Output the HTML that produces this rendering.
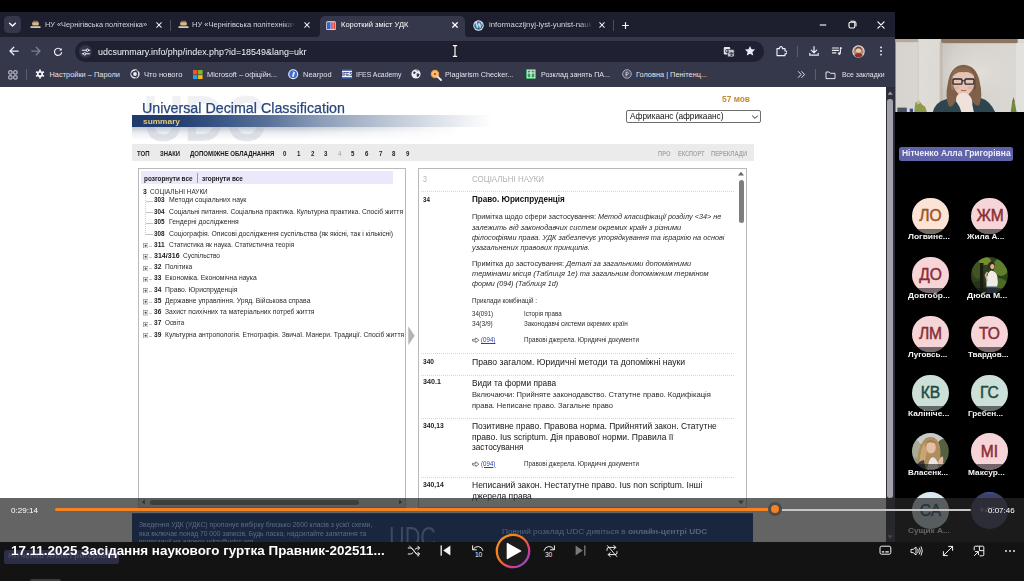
<!DOCTYPE html>
<html lang="uk"><head><meta charset="utf-8"><title>Короткий зміст УДК</title>
<style>
html,body{margin:0;padding:0;background:#000;}
body{width:1024px;height:581px;overflow:hidden;position:relative;font-family:"Liberation Sans",sans-serif;}
#root{position:absolute;left:0;top:0;width:1024px;height:581px;overflow:hidden;background:#000;}
#root div,#root svg,#root span.t{position:absolute;}
.t{white-space:nowrap;transform-origin:0 50%;display:block;}
.t i{font-style:italic;}
.layer{left:0;top:0;width:1024px;height:581px;overflow:hidden;}
#l-page{clip-path:inset(87px 129px 34px 0);}
</style></head><body><div id="root">
<div class="layer" id="l-page">
<div style="left:0px;top:87px;width:886px;height:460px;background:#ffffff;"></div>
<div style="left:885.5px;top:87px;width:9px;height:460px;background:#2c2e3c;"></div>
<svg style="left:886px;top:89px;" width="8.5" height="8" viewBox="0 0 8.5 8"><path d="M1.6 5.8 L4.25 2.6 L6.9 5.8 Z" fill="#9a9ba6"/></svg>
<div style="left:887.4px;top:98.6px;width:5.4px;height:399px;background:#a2a2a8;border-radius:2.7px;"></div>
<svg style="left:886px;top:533px;" width="8.5" height="8" viewBox="0 0 8.5 8"><path d="M1.6 2.2 L4.25 5.4 L6.9 2.2 Z" fill="#9a9ba6"/></svg>
<span id="t1" class="t" style="left:143px;top:81.1px;font-size:64px;line-height:76.8px;color:transparent;font-weight:700;transform:scaleX(0.8871);background:linear-gradient(180deg,#f0f2f4 0%,#eef0f3 44%,#d3d8df 60%,#dde1e6 72%,#eef0f2 84%,#f5f6f7 100%);-webkit-background-clip:text;background-clip:text;filter:blur(0.5px);">UDC</span>
<span id="t2" class="t" style="left:142px;top:98.88px;font-size:15.2px;line-height:18.24px;color:#27477c;transform:scaleX(0.9395);-webkit-text-stroke:0.25px #27477c;">Universal Decimal Classification</span>
<div style="left:132px;top:115.3px;width:360px;height:12px;background:linear-gradient(90deg,#1f3c6c 0%,#213e6e 12%,#3a5787 25%,#5a7299 38%,#8b9cb8 52%,#b5c0d0 68%,#dde2ea 85%,#ffffff 100%);"></div>
<div style="left:132px;top:127.3px;width:330px;height:13px;background:linear-gradient(180deg,rgba(178,186,199,.8),rgba(214,219,227,.5) 45%,rgba(255,255,255,0));-webkit-mask-image:linear-gradient(90deg,#000 0%,#000 50%,transparent 100%);"></div>
<span id="t3" class="t" style="left:143px;top:116.81px;font-size:8px;line-height:9.6px;color:#e8c878;font-weight:700;transform:scaleX(1.0400);">summary</span>
<span id="t4" class="t" style="left:722px;top:94.97px;font-size:8.2px;line-height:9.84px;color:#c98a2f;font-weight:700;transform:scaleX(1.0228);">57 мов</span>
<div style="left:626px;top:110px;width:135px;height:12.5px;background:#fff;border:0.8px solid #6d6d6d;border-radius:2px;box-sizing:border-box;"></div>
<span id="t5" class="t" style="left:629.5px;top:111.08px;font-size:9.2px;line-height:11.04px;color:#111;transform:scaleX(0.9004);">Африкаанс (африкаанс)</span>
<svg style="left:750.8px;top:112.8px;" width="8" height="8" viewBox="0 0 8 8"><path d="M1.2 2.6 L4 5.4 L6.8 2.6" fill="none" stroke="#222" stroke-width="1"/></svg>
<div style="left:132px;top:144px;width:622px;height:17.3px;background:#ebebeb;"></div>
<span id="t6" class="t" style="left:137px;top:150.02px;font-size:6.3px;line-height:7.56px;color:#1c1c1c;font-weight:700;transform:scaleX(0.9524);">ТОП</span>
<span id="t7" class="t" style="left:159.5px;top:150.02px;font-size:6.3px;line-height:7.56px;color:#1c1c1c;font-weight:700;transform:scaleX(0.9336);">ЗНАКИ</span>
<span id="t8" class="t" style="left:189.5px;top:150.02px;font-size:6.3px;line-height:7.56px;color:#1c1c1c;font-weight:700;transform:scaleX(0.9615);">ДОПОМІЖНЕ ОБЛАДНАННЯ</span>
<span id="t9" class="t" style="left:283.3px;top:150.02px;font-size:6.3px;line-height:7.56px;color:#1c1c1c;font-weight:700;transform:scaleX(0.9671);">0</span>
<span id="t10" class="t" style="left:296.9px;top:150.02px;font-size:6.3px;line-height:7.56px;color:#1c1c1c;font-weight:700;transform:scaleX(0.9671);">1</span>
<span id="t11" class="t" style="left:310.5px;top:150.02px;font-size:6.3px;line-height:7.56px;color:#1c1c1c;font-weight:700;transform:scaleX(0.9671);">2</span>
<span id="t12" class="t" style="left:324.1px;top:150.02px;font-size:6.3px;line-height:7.56px;color:#1c1c1c;font-weight:700;transform:scaleX(0.9671);">3</span>
<span id="t13" class="t" style="left:337.7px;top:150.02px;font-size:6.3px;line-height:7.56px;color:#b5b5b5;font-weight:700;transform:scaleX(0.9671);">4</span>
<span id="t14" class="t" style="left:351.3px;top:150.02px;font-size:6.3px;line-height:7.56px;color:#1c1c1c;font-weight:700;transform:scaleX(0.9671);">5</span>
<span id="t15" class="t" style="left:364.9px;top:150.02px;font-size:6.3px;line-height:7.56px;color:#1c1c1c;font-weight:700;transform:scaleX(0.9671);">6</span>
<span id="t16" class="t" style="left:378.5px;top:150.02px;font-size:6.3px;line-height:7.56px;color:#1c1c1c;font-weight:700;transform:scaleX(0.9671);">7</span>
<span id="t17" class="t" style="left:392.1px;top:150.02px;font-size:6.3px;line-height:7.56px;color:#1c1c1c;font-weight:700;transform:scaleX(0.9671);">8</span>
<span id="t18" class="t" style="left:405.7px;top:150.02px;font-size:6.3px;line-height:7.56px;color:#1c1c1c;font-weight:700;transform:scaleX(0.9671);">9</span>
<span id="t19" class="t" style="left:658.3px;top:150.02px;font-size:6.3px;line-height:7.56px;color:#a9a9a9;font-weight:700;transform:scaleX(0.9227);">ПРО</span>
<span id="t20" class="t" style="left:677.5px;top:150.02px;font-size:6.3px;line-height:7.56px;color:#a9a9a9;font-weight:700;transform:scaleX(0.8861);">ЕКСПОРТ</span>
<span id="t21" class="t" style="left:710.8px;top:150.02px;font-size:6.3px;line-height:7.56px;color:#a9a9a9;font-weight:700;transform:scaleX(0.9238);">ПЕРЕКЛАДИ</span>
<div style="left:138px;top:168.3px;width:267.6px;height:340px;border:0.8px solid #b9b9b9;box-sizing:border-box;background:#fff;"></div>
<div style="left:141px;top:171.3px;width:252px;height:13px;background:#e9e9fb;"></div>
<span id="t22" class="t" style="left:143.9px;top:174.57px;font-size:6.6px;line-height:7.92px;color:#1a1a1a;font-weight:700;transform:scaleX(0.9694);">розгорнути все</span>
<div style="left:197.4px;top:173.3px;width:0.7px;height:9.5px;background:#9a9aa8;"></div>
<span id="t23" class="t" style="left:202.3px;top:174.57px;font-size:6.6px;line-height:7.92px;color:#1a1a1a;font-weight:700;transform:scaleX(0.9724);">згорнути все</span>
<span id="t24" class="t" style="left:142.6px;top:188px;font-size:7px;line-height:8.4px;color:#1a1a1a;font-weight:700;transform:scaleX(0.9728);">3</span>
<span id="t25" class="t" style="left:149.9px;top:188px;font-size:7px;line-height:8.4px;color:#2a2a2a;transform:scaleX(0.9100);">СОЦІАЛЬНІ НАУКИ</span>
<div style="left:145.3px;top:195px;width:0;height:40px;border-left:0.7px dotted #cfcfcf;"></div>
<div style="left:146px;top:201px;width:6.5px;height:0.7px;background:#c4c4c4;"></div>
<span id="t26" class="t" style="left:154.2px;top:196.29px;font-size:7px;line-height:8.4px;color:#1a1a1a;font-weight:700;transform:scaleX(0.9070);">303</span>
<span id="t27" class="t" style="left:168.8px;top:196.29px;font-size:7px;line-height:8.4px;color:#2a2a2a;transform:scaleX(0.9858);">Методи соціальних наук</span>
<div style="left:146px;top:212.3px;width:6.5px;height:0.7px;background:#c4c4c4;"></div>
<span id="t28" class="t" style="left:154.2px;top:207.59px;font-size:7px;line-height:8.4px;color:#1a1a1a;font-weight:700;transform:scaleX(0.9070);">304</span>
<span id="t29" class="t" style="left:168.8px;top:207.59px;font-size:7px;line-height:8.4px;color:#2a2a2a;transform:scaleX(0.9649);">Соціальні питання. Соціальна практика. Культурна практика. Спосіб життя</span>
<div style="left:146px;top:223px;width:6.5px;height:0.7px;background:#c4c4c4;"></div>
<span id="t30" class="t" style="left:154.2px;top:218.29px;font-size:7px;line-height:8.4px;color:#1a1a1a;font-weight:700;transform:scaleX(0.9070);">305</span>
<span id="t31" class="t" style="left:168.8px;top:218.29px;font-size:7px;line-height:8.4px;color:#2a2a2a;transform:scaleX(0.9731);">Гендерні дослідження</span>
<div style="left:146px;top:234.3px;width:6.5px;height:0.7px;background:#c4c4c4;"></div>
<span id="t32" class="t" style="left:154.2px;top:229.59px;font-size:7px;line-height:8.4px;color:#1a1a1a;font-weight:700;transform:scaleX(0.9070);">308</span>
<span id="t33" class="t" style="left:168.8px;top:229.59px;font-size:7px;line-height:8.4px;color:#2a2a2a;transform:scaleX(0.9718);">Соціографія. Описові дослідження суспільства (як якісні, так і кількісні)</span>
<div style="left:148.6px;top:245.6px;width:3.6px;height:0.7px;background:#c4c4c4;"></div>
<svg style="left:142.8px;top:243.1px;" width="5.4" height="5.4" viewBox="0 0 5.4 5.4"><rect x="0.4" y="0.4" width="4.6" height="4.6" fill="#fff" stroke="#8c8c8c" stroke-width="0.7"/><path d="M1.5 2.7 H3.9 M2.7 1.5 V3.9" stroke="#333" stroke-width="0.8"/></svg>
<span id="t34" class="t" style="left:154.2px;top:240.89px;font-size:7px;line-height:8.4px;color:#1a1a1a;font-weight:700;transform:scaleX(0.9383);">311</span>
<span id="t35" class="t" style="left:168.8px;top:240.89px;font-size:7px;line-height:8.4px;color:#2a2a2a;transform:scaleX(0.9425);">Статистика як наука. Статистична теорія</span>
<div style="left:148.6px;top:256.8px;width:3.6px;height:0.7px;background:#c4c4c4;"></div>
<svg style="left:142.8px;top:254.3px;" width="5.4" height="5.4" viewBox="0 0 5.4 5.4"><rect x="0.4" y="0.4" width="4.6" height="4.6" fill="#fff" stroke="#8c8c8c" stroke-width="0.7"/><path d="M1.5 2.7 H3.9 M2.7 1.5 V3.9" stroke="#333" stroke-width="0.8"/></svg>
<span id="t36" class="t" style="left:154.2px;top:252.09px;font-size:7px;line-height:8.4px;color:#1a1a1a;font-weight:700;transform:scaleX(1.0114);">314/316</span>
<span id="t37" class="t" style="left:183px;top:252.09px;font-size:7px;line-height:8.4px;color:#2a2a2a;transform:scaleX(0.9416);">Суспільство</span>
<div style="left:148.6px;top:268px;width:3.6px;height:0.7px;background:#c4c4c4;"></div>
<svg style="left:142.8px;top:265.5px;" width="5.4" height="5.4" viewBox="0 0 5.4 5.4"><rect x="0.4" y="0.4" width="4.6" height="4.6" fill="#fff" stroke="#8c8c8c" stroke-width="0.7"/><path d="M1.5 2.7 H3.9 M2.7 1.5 V3.9" stroke="#333" stroke-width="0.8"/></svg>
<span id="t38" class="t" style="left:154.2px;top:263.29px;font-size:7px;line-height:8.4px;color:#1a1a1a;font-weight:700;transform:scaleX(0.9363);">32</span>
<span id="t39" class="t" style="left:164.8px;top:263.29px;font-size:7px;line-height:8.4px;color:#2a2a2a;transform:scaleX(0.9497);">Політика</span>
<div style="left:148.6px;top:279.2px;width:3.6px;height:0.7px;background:#c4c4c4;"></div>
<svg style="left:142.8px;top:276.7px;" width="5.4" height="5.4" viewBox="0 0 5.4 5.4"><rect x="0.4" y="0.4" width="4.6" height="4.6" fill="#fff" stroke="#8c8c8c" stroke-width="0.7"/><path d="M1.5 2.7 H3.9 M2.7 1.5 V3.9" stroke="#333" stroke-width="0.8"/></svg>
<span id="t40" class="t" style="left:154.2px;top:274.49px;font-size:7px;line-height:8.4px;color:#1a1a1a;font-weight:700;transform:scaleX(0.9363);">33</span>
<span id="t41" class="t" style="left:164.8px;top:274.49px;font-size:7px;line-height:8.4px;color:#2a2a2a;transform:scaleX(0.9723);">Економіка. Економічна наука</span>
<div style="left:148.6px;top:290.5px;width:3.6px;height:0.7px;background:#c4c4c4;"></div>
<svg style="left:142.8px;top:288px;" width="5.4" height="5.4" viewBox="0 0 5.4 5.4"><rect x="0.4" y="0.4" width="4.6" height="4.6" fill="#fff" stroke="#8c8c8c" stroke-width="0.7"/><path d="M1.5 2.7 H3.9 M2.7 1.5 V3.9" stroke="#333" stroke-width="0.8"/></svg>
<span id="t42" class="t" style="left:154.2px;top:285.79px;font-size:7px;line-height:8.4px;color:#1a1a1a;font-weight:700;transform:scaleX(0.9363);">34</span>
<span id="t43" class="t" style="left:164.8px;top:285.79px;font-size:7px;line-height:8.4px;color:#2a2a2a;transform:scaleX(0.9694);">Право. Юриспруденція</span>
<div style="left:148.6px;top:301.8px;width:3.6px;height:0.7px;background:#c4c4c4;"></div>
<svg style="left:142.8px;top:299.3px;" width="5.4" height="5.4" viewBox="0 0 5.4 5.4"><rect x="0.4" y="0.4" width="4.6" height="4.6" fill="#fff" stroke="#8c8c8c" stroke-width="0.7"/><path d="M1.5 2.7 H3.9 M2.7 1.5 V3.9" stroke="#333" stroke-width="0.8"/></svg>
<span id="t44" class="t" style="left:154.2px;top:297.09px;font-size:7px;line-height:8.4px;color:#1a1a1a;font-weight:700;transform:scaleX(0.9363);">35</span>
<span id="t45" class="t" style="left:164.8px;top:297.09px;font-size:7px;line-height:8.4px;color:#2a2a2a;transform:scaleX(0.9672);">Державне управління. Уряд. Військова справа</span>
<div style="left:148.6px;top:312.9px;width:3.6px;height:0.7px;background:#c4c4c4;"></div>
<svg style="left:142.8px;top:310.4px;" width="5.4" height="5.4" viewBox="0 0 5.4 5.4"><rect x="0.4" y="0.4" width="4.6" height="4.6" fill="#fff" stroke="#8c8c8c" stroke-width="0.7"/><path d="M1.5 2.7 H3.9 M2.7 1.5 V3.9" stroke="#333" stroke-width="0.8"/></svg>
<span id="t46" class="t" style="left:154.2px;top:308.19px;font-size:7px;line-height:8.4px;color:#1a1a1a;font-weight:700;transform:scaleX(0.9363);">36</span>
<span id="t47" class="t" style="left:164.8px;top:308.19px;font-size:7px;line-height:8.4px;color:#2a2a2a;transform:scaleX(0.9617);">Захист психічних та матеріальних потреб життя</span>
<div style="left:148.6px;top:324.2px;width:3.6px;height:0.7px;background:#c4c4c4;"></div>
<svg style="left:142.8px;top:321.7px;" width="5.4" height="5.4" viewBox="0 0 5.4 5.4"><rect x="0.4" y="0.4" width="4.6" height="4.6" fill="#fff" stroke="#8c8c8c" stroke-width="0.7"/><path d="M1.5 2.7 H3.9 M2.7 1.5 V3.9" stroke="#333" stroke-width="0.8"/></svg>
<span id="t48" class="t" style="left:154.2px;top:319.49px;font-size:7px;line-height:8.4px;color:#1a1a1a;font-weight:700;transform:scaleX(0.9363);">37</span>
<span id="t49" class="t" style="left:164.8px;top:319.49px;font-size:7px;line-height:8.4px;color:#2a2a2a;transform:scaleX(0.9035);">Освіта</span>
<div style="left:148.6px;top:335.6px;width:3.6px;height:0.7px;background:#c4c4c4;"></div>
<svg style="left:142.8px;top:333.1px;" width="5.4" height="5.4" viewBox="0 0 5.4 5.4"><rect x="0.4" y="0.4" width="4.6" height="4.6" fill="#fff" stroke="#8c8c8c" stroke-width="0.7"/><path d="M1.5 2.7 H3.9 M2.7 1.5 V3.9" stroke="#333" stroke-width="0.8"/></svg>
<span id="t50" class="t" style="left:154.2px;top:330.89px;font-size:7px;line-height:8.4px;color:#1a1a1a;font-weight:700;transform:scaleX(0.9363);">39</span>
<span id="t51" class="t" style="left:164.8px;top:330.89px;font-size:7px;line-height:8.4px;color:#2a2a2a;transform:scaleX(0.9560);">Культурна антропологія. Етнографія. Звичаї. Манери. Традиції. Спосіб життя</span>
<div style="left:138.6px;top:498px;width:266.4px;height:8.6px;background:#e3e3e3;"></div>
<div style="left:150px;top:499.6px;width:209px;height:5.4px;background:#7a7a7a;border-radius:2.5px;"></div>
<svg style="left:139.5px;top:498.3px;" width="7" height="8" viewBox="0 0 7 8"><path d="M4.8 1.4 L1.8 4 L4.8 6.6Z" fill="#4a4a4a"/></svg>
<svg style="left:397px;top:498.3px;" width="7" height="8" viewBox="0 0 7 8"><path d="M2.2 1.4 L5.2 4 L2.2 6.6Z" fill="#4a4a4a"/></svg>
<svg style="left:408px;top:326px;" width="7" height="19.4" viewBox="0 0 7 19.4"><path d="M0.3 0.3 L6.7 9.7 L0.3 19.1 Z" fill="#b4b4b4"/></svg>
<div style="left:418px;top:168.3px;width:329.2px;height:340px;border:0.8px solid #b9b9b9;box-sizing:border-box;background:#fff;"></div>
<svg style="left:737.3px;top:170.3px;" width="8" height="7" viewBox="0 0 8 7"><path d="M1 5.6 L4 1.8 L7 5.6 Z" fill="#666"/></svg>
<div style="left:738.7px;top:179.5px;width:5.2px;height:43px;background:#7e7e7e;border-radius:2.6px;"></div>
<svg style="left:737.3px;top:498.8px;" width="8" height="7" viewBox="0 0 8 7"><path d="M1 1.6 L4 5.4 L7 1.6 Z" fill="#666"/></svg>
<span id="t52" class="t" style="left:423.3px;top:173.8px;font-size:9px;line-height:10.8px;color:#b3b3b3;transform:scaleX(0.7776);">3</span>
<span id="t53" class="t" style="left:472.2px;top:173.8px;font-size:9px;line-height:10.8px;color:#b3b3b3;transform:scaleX(0.8845);">СОЦІАЛЬНІ НАУКИ</span>
<div style="left:421px;top:191.3px;width:313px;height:0;border-top:0.7px dotted #d6d6d6;"></div>
<span id="t54" class="t" style="left:423.3px;top:195.98px;font-size:7.2px;line-height:8.64px;color:#1b1b1b;font-weight:700;transform:scaleX(0.8625);">34</span>
<span id="t55" class="t" style="left:472.2px;top:194.22px;font-size:9.3px;line-height:11.16px;color:#111;font-weight:700;transform:scaleX(0.8701);">Право. Юриспруденція</span>
<span id="t56" class="t" style="left:472.2px;top:211.91px;font-size:7.7px;line-height:9.24px;color:#2b2b2b;transform:scaleX(0.9464);">Примітка щодо сфери застосування: <i>Метод класифікації розділу &lt;34&gt; не</i></span>
<span id="t57" class="t" style="left:472.2px;top:222.51px;font-size:7.7px;line-height:9.24px;color:#2b2b2b;transform:scaleX(0.9667);"><i>залежить від законодавчих систем окремих країн з різними</i></span>
<span id="t58" class="t" style="left:472.2px;top:232.81px;font-size:7.7px;line-height:9.24px;color:#2b2b2b;transform:scaleX(0.9534);"><i>філософіями права. УДК забезпечує упорядкування та ієрархію на основі</i></span>
<span id="t59" class="t" style="left:472.2px;top:243.11px;font-size:7.7px;line-height:9.24px;color:#2b2b2b;transform:scaleX(0.9514);"><i>узагальнених правових принципів.</i></span>
<span id="t60" class="t" style="left:472.2px;top:258.61px;font-size:7.7px;line-height:9.24px;color:#2b2b2b;transform:scaleX(0.9632);">Примітка до застосування: <i>Деталі за загальними допоміжними</i></span>
<span id="t61" class="t" style="left:472.2px;top:269.01px;font-size:7.7px;line-height:9.24px;color:#2b2b2b;transform:scaleX(0.9661);"><i>термінами місця (Таблиця 1e) та загальним допоміжним терміном</i></span>
<span id="t62" class="t" style="left:472.2px;top:279.31px;font-size:7.7px;line-height:9.24px;color:#2b2b2b;transform:scaleX(0.9306);"><i>форми (094) (Таблиця 1d)</i></span>
<span id="t63" class="t" style="left:472.2px;top:296.6px;font-size:6.7px;line-height:8.04px;color:#2b2b2b;transform:scaleX(0.9418);">Приклади комбінацій :</span>
<span id="t64" class="t" style="left:472.2px;top:309.6px;font-size:6.7px;line-height:8.04px;color:#2b2b2b;transform:scaleX(0.9149);">34(091)</span>
<span id="t65" class="t" style="left:524.3px;top:309.6px;font-size:6.7px;line-height:8.04px;color:#2b2b2b;transform:scaleX(0.9202);">Історія права</span>
<span id="t66" class="t" style="left:472.2px;top:319.9px;font-size:6.7px;line-height:8.04px;color:#2b2b2b;transform:scaleX(0.9810);">34(3/9)</span>
<span id="t67" class="t" style="left:524.3px;top:319.9px;font-size:6.7px;line-height:8.04px;color:#2b2b2b;transform:scaleX(0.9401);">Законодавчі системи окремих країн</span>
<svg style="left:472px;top:337.4px;" width="7.5" height="6.4" viewBox="0 0 7.5 6.4"><path d="M0.6 2.3 H3.8 V0.8 L6.9 3.2 L3.8 5.6 V4.1 H0.6 Z" fill="none" stroke="#444" stroke-width="0.7" stroke-linejoin="round"/></svg>
<span id="t68" class="t" style="left:481px;top:336px;font-size:6.7px;line-height:8.04px;color:#2a3fb0;transform:scaleX(0.9216);text-decoration:underline;">(094)</span>
<span id="t69" class="t" style="left:524.3px;top:336px;font-size:6.7px;line-height:8.04px;color:#2b2b2b;transform:scaleX(0.9421);">Правові джерела. Юридичні документи</span>
<div style="left:421px;top:353.2px;width:313px;height:0;border-top:0.7px dotted #d6d6d6;"></div>
<span id="t70" class="t" style="left:423.3px;top:357.68px;font-size:7.2px;line-height:8.64px;color:#1b1b1b;font-weight:700;transform:scaleX(0.9167);">340</span>
<span id="t71" class="t" style="left:472.2px;top:355.75px;font-size:9.4px;line-height:11.28px;color:#161616;transform:scaleX(0.9208);">Право загалом. Юридичні методи та допоміжні науки</span>
<div style="left:421px;top:374.6px;width:313px;height:0;border-top:0.7px dotted #d6d6d6;"></div>
<span id="t72" class="t" style="left:423.3px;top:378.48px;font-size:7.2px;line-height:8.64px;color:#1b1b1b;font-weight:700;transform:scaleX(0.9944);">340.1</span>
<span id="t73" class="t" style="left:472.2px;top:376.55px;font-size:9.4px;line-height:11.28px;color:#161616;transform:scaleX(0.8867);">Види та форми права</span>
<span id="t74" class="t" style="left:472.2px;top:389.91px;font-size:7.7px;line-height:9.24px;color:#2b2b2b;transform:scaleX(0.9877);">Включаючи: Прийняте законодавство. Статутне право. Кодифікація</span>
<span id="t75" class="t" style="left:472.2px;top:400.61px;font-size:7.7px;line-height:9.24px;color:#2b2b2b;transform:scaleX(0.9823);">права. Неписане право. Загальне право</span>
<div style="left:421px;top:418px;width:313px;height:0;border-top:0.7px dotted #d6d6d6;"></div>
<span id="t76" class="t" style="left:423.3px;top:421.68px;font-size:7.2px;line-height:8.64px;color:#1b1b1b;font-weight:700;transform:scaleX(0.9416);">340,13</span>
<span id="t77" class="t" style="left:472.2px;top:419.75px;font-size:9.4px;line-height:11.28px;color:#161616;transform:scaleX(0.9025);">Позитивне право. Правова норма. Прийнятий закон. Статутне</span>
<span id="t78" class="t" style="left:472.2px;top:430.75px;font-size:9.4px;line-height:11.28px;color:#161616;transform:scaleX(0.9079);">право. Ius scriptum. Дія правової норми. Правила її</span>
<span id="t79" class="t" style="left:472.2px;top:441.15px;font-size:9.4px;line-height:11.28px;color:#161616;transform:scaleX(0.8786);">застосування</span>
<svg style="left:472px;top:461.1px;" width="7.5" height="6.4" viewBox="0 0 7.5 6.4"><path d="M0.6 2.3 H3.8 V0.8 L6.9 3.2 L3.8 5.6 V4.1 H0.6 Z" fill="none" stroke="#444" stroke-width="0.7" stroke-linejoin="round"/></svg>
<span id="t80" class="t" style="left:481px;top:459.7px;font-size:6.7px;line-height:8.04px;color:#2a3fb0;transform:scaleX(0.9216);text-decoration:underline;">(094)</span>
<span id="t81" class="t" style="left:524.3px;top:459.7px;font-size:6.7px;line-height:8.04px;color:#2b2b2b;transform:scaleX(0.9421);">Правові джерела. Юридичні документи</span>
<div style="left:421px;top:477.4px;width:313px;height:0;border-top:0.7px dotted #d6d6d6;"></div>
<span id="t82" class="t" style="left:423.3px;top:480.78px;font-size:7.2px;line-height:8.64px;color:#1b1b1b;font-weight:700;transform:scaleX(0.9416);">340,14</span>
<span id="t83" class="t" style="left:472.2px;top:478.85px;font-size:9.4px;line-height:11.28px;color:#161616;transform:scaleX(0.9060);">Неписаний закон. Нестатутне право. Ius non scriptum. Інші</span>
<span id="t84" class="t" style="left:472.2px;top:489.65px;font-size:9.4px;line-height:11.28px;color:#161616;transform:scaleX(0.9065);">джерела права</span>
</div>
<div class="layer" id="l-chrome">
<div style="left:0px;top:12px;width:895px;height:26px;background:#1d1f2e;"></div>
<div style="left:0px;top:37.2px;width:895px;height:49.8px;background:#35374b;"></div>
<div style="left:4px;top:16px;width:16.5px;height:16.5px;background:#35374b;border-radius:4.5px;"></div>
<svg style="left:8px;top:21px;" width="9" height="7" viewBox="0 0 9 7"><path d="M1.6 2.2 L4.5 5 L7.4 2.2" fill="none" stroke="#fff" stroke-width="1.4" stroke-linecap="round" stroke-linejoin="round"/></svg>
<svg style="left:29.5px;top:20px;" width="11" height="10" viewBox="0 0 11 10"><rect x="0.5" y="6.3" width="10" height="1.6" fill="#e9dcc0"/><rect x="2.2" y="2" width="6.6" height="3.6" rx="1" fill="#d6b98a"/><rect x="3" y="0.8" width="5" height="1.6" fill="#8a6b4a"/></svg>
<span id="t85" class="t" style="left:45px;top:20.38px;font-size:7.6px;line-height:9.12px;color:#d4d5de;transform:scaleX(0.9680);">НУ «Чернігівська політехніка»</span>
<svg style="left:155px;top:21px;" width="8" height="8" viewBox="0 0 8 8"><path d="M1.7 1.7 L6.3 6.3 M6.3 1.7 L1.7 6.3" stroke="#e8e8f0" stroke-width="1.05" stroke-linecap="round"/></svg>
<div style="left:170px;top:19.5px;width:0.8px;height:11px;background:#4a4c60;"></div>
<svg style="left:177.5px;top:20px;" width="11" height="10" viewBox="0 0 11 10"><rect x="0.5" y="6.3" width="10" height="1.6" fill="#e9dcc0"/><rect x="2.2" y="2" width="6.6" height="3.6" rx="1" fill="#d6b98a"/><rect x="3" y="0.8" width="5" height="1.6" fill="#8a6b4a"/></svg>
<span id="t86" class="t" style="left:192px;top:20.38px;font-size:7.6px;line-height:9.12px;color:#d4d5de;transform:scaleX(0.9870);-webkit-mask-image:linear-gradient(90deg,#000 88%,transparent 100%);">НУ «Чернігівська політехніка»</span>
<svg style="left:303px;top:21px;" width="8" height="8" viewBox="0 0 8 8"><path d="M1.7 1.7 L6.3 6.3 M6.3 1.7 L1.7 6.3" stroke="#e8e8f0" stroke-width="1.05" stroke-linecap="round"/></svg>
<div style="left:320px;top:16px;width:145px;height:22px;background:#35374b;border-radius:5px 5px 0 0;"></div>
<svg style="left:315px;top:32.5px;" width="5" height="5" viewBox="0 0 5 5"><path d="M5 0 V5 H0 A5 5 0 0 0 5 0Z" fill="#35374b"/></svg>
<svg style="left:465px;top:32.5px;" width="5" height="5" viewBox="0 0 5 5"><path d="M0 0 V5 H5 A5 5 0 0 1 0 0Z" fill="#35374b"/></svg>
<svg style="left:326px;top:20.5px;" width="10" height="9.5" viewBox="0 0 10 9.5"><rect x="0.3" y="0.3" width="9.4" height="8.9" rx="1.2" fill="#e9eefc"/><rect x="1" y="1.2" width="3.6" height="7" fill="#3c62c8"/><rect x="5.2" y="1.2" width="1.6" height="7" fill="#d8463c"/><rect x="7.4" y="1.2" width="1.6" height="7" fill="#d8463c"/></svg>
<span id="t87" class="t" style="left:340.5px;top:20.25px;font-size:7.8px;line-height:9.36px;color:#ffffff;transform:scaleX(0.9647);">Короткий зміст УДК</span>
<svg style="left:450.8px;top:21px;" width="8" height="8" viewBox="0 0 8 8"><path d="M1.7 1.7 L6.3 6.3 M6.3 1.7 L1.7 6.3" stroke="#ffffff" stroke-width="1.25" stroke-linecap="round"/></svg>
<svg style="left:472.5px;top:19.5px;" width="11" height="11" viewBox="0 0 11 11"><circle cx="5.5" cy="5.5" r="5.2" fill="#e6ecf2"/><circle cx="5.5" cy="5.5" r="4.3" fill="#3a6f97"/><text x="5.5" y="8.4" font-size="7.6" font-weight="700" text-anchor="middle" fill="#e6ecf2" font-family="Liberation Serif, serif">W</text></svg>
<span id="t88" class="t" style="left:488.5px;top:20.38px;font-size:7.6px;line-height:9.12px;color:#d4d5de;transform:scaleX(1.0219);-webkit-mask-image:linear-gradient(90deg,#000 88%,transparent 100%);">informaczijnyj-lyst-yunist-nauk</span>
<svg style="left:598px;top:21px;" width="8" height="8" viewBox="0 0 8 8"><path d="M1.7 1.7 L6.3 6.3 M6.3 1.7 L1.7 6.3" stroke="#e8e8f0" stroke-width="1.05" stroke-linecap="round"/></svg>
<div style="left:613.3px;top:19.5px;width:0.8px;height:11px;background:#4a4c60;"></div>
<svg style="left:621px;top:20.7px;" width="9" height="9" viewBox="0 0 9 9"><path d="M4.5 1.6 V7.4 M1.6 4.5 H7.4" stroke="#f0f0f6" stroke-width="1.2" stroke-linecap="round"/></svg>
<svg style="left:818px;top:20px;" width="10" height="10" viewBox="0 0 10 10"><path d="M1.8 5 H8.2" stroke="#fff" stroke-width="1.1"/></svg>
<svg style="left:847px;top:20px;" width="10" height="10" viewBox="0 0 10 10"><rect x="2" y="2.2" width="5.8" height="5.8" rx="1.4" fill="none" stroke="#fff" stroke-width="1.1"/><path d="M3.6 1.2 H7 A2 2 0 0 1 9 3.2 V6.4" fill="none" stroke="#fff" stroke-width="1"/></svg>
<svg style="left:876.5px;top:21px;" width="8" height="8" viewBox="0 0 8 8"><path d="M0.9 0.9 L7.1 7.1 M7.1 0.9 L0.9 7.1" stroke="#ffffff" stroke-width="1.2" stroke-linecap="round"/></svg>
<svg style="left:7.8px;top:45.3px;" width="12" height="12" viewBox="0 0 12 12"><path d="M10.2 6 H2.2 M5.8 2.2 L2 6 L5.8 9.8" fill="none" stroke="#eeeef6" stroke-width="1.25" stroke-linecap="round" stroke-linejoin="round"/></svg>
<svg style="left:30px;top:45.3px;" width="12" height="12" viewBox="0 0 12 12"><path d="M1.8 6 H9.8 M6.2 2.2 L10 6 L6.2 9.8" fill="none" stroke="#7c7e92" stroke-width="1.25" stroke-linecap="round" stroke-linejoin="round"/></svg>
<svg style="left:52.3px;top:45.5px;" width="12" height="12" viewBox="0 0 12 12"><path d="M8.9 3.6 A3.6 3.6 0 1 0 9.6 6.6" fill="none" stroke="#eeeef6" stroke-width="1.2" stroke-linecap="round"/><path d="M9.7 1.9 V4.5 H7.1 Z" fill="#eeeef6"/></svg>
<div style="left:75px;top:41px;width:688.5px;height:20.5px;background:#1f2132;border-radius:10.25px;"></div>
<div style="left:78.5px;top:44.5px;width:13.5px;height:13.5px;border-radius:50%;background:#33354a"></div>
<svg style="left:80.5px;top:46.5px;" width="10" height="10" viewBox="0 0 10 10"><path d="M1.3 3.2 H5 M7.6 3.2 H8.7 M1.3 6.8 H2.4 M5 6.8 H8.7" stroke="#f2f2f8" stroke-width="1.1" stroke-linecap="round"/><circle cx="6.3" cy="3.2" r="1.25" fill="none" stroke="#f2f2f8" stroke-width="1"/><circle cx="3.7" cy="6.8" r="1.25" fill="none" stroke="#f2f2f8" stroke-width="1"/></svg>
<span id="t89" class="t" style="left:97.5px;top:46.56px;font-size:8.8px;line-height:10.56px;color:#f4f4fa;transform:scaleX(1.0158);">udcsummary.info/php/index.php?id=18549&amp;lang=ukr</span>
<svg style="left:450px;top:44px;" width="10" height="14" viewBox="0 0 10 14"><path d="M2.6 1.6 H7.4 M5 1.6 V12.4 M2.6 12.4 H7.4" stroke="#1a1a22" stroke-width="2.6" stroke-linecap="round"/><path d="M2.8 1.6 H7.2 M5 1.6 V12.4 M2.8 12.4 H7.2" stroke="#fff" stroke-width="1.2"/></svg>
<svg style="left:723px;top:45.5px;" width="12" height="12" viewBox="0 0 12 12"><rect x="0.8" y="1" width="6.4" height="7.4" rx="1" fill="#e6e7ef"/><rect x="4.6" y="3.6" width="6.6" height="7.4" rx="1" fill="#c9cad6" stroke="#1f2132" stroke-width="0.6"/><text x="4" y="7" font-size="5.4" font-weight="700" text-anchor="middle" fill="#1f2132" font-family="Liberation Sans, sans-serif">G</text><text x="8" y="9.8" font-size="5" font-weight="700" text-anchor="middle" fill="#1f2132" font-family="Liberation Sans, sans-serif">文</text></svg>
<svg style="left:743.5px;top:45px;" width="12" height="12" viewBox="0 0 12 12"><path d="M6 0.9 L7.55 4.2 L11.1 4.6 L8.45 7.05 L9.2 10.6 L6 8.8 L2.8 10.6 L3.55 7.05 L0.9 4.6 L4.45 4.2 Z" fill="#e8ecff"/></svg>
<svg style="left:774.5px;top:45px;" width="12" height="12" viewBox="0 0 12 12"><path d="M2 3.6 H4.6 A1.5 1.5 0 1 1 7.4 3.6 H10 V6 A1.5 1.5 0 1 1 10 8.8 V10.6 H2 Z" fill="none" stroke="#eeeef6" stroke-width="1.15" stroke-linejoin="round"/></svg>
<div style="left:796.8px;top:46px;width:0.8px;height:10.5px;background:#5a5c72;"></div>
<svg style="left:807.5px;top:45px;" width="12" height="12" viewBox="0 0 12 12"><path d="M6 1.6 V7.6 M3.3 5.2 L6 7.9 L8.7 5.2 M1.8 8.4 V10.2 H10.2 V8.4" fill="none" stroke="#eeeef6" stroke-width="1.2" stroke-linecap="round" stroke-linejoin="round"/></svg>
<svg style="left:831px;top:45px;" width="12" height="12" viewBox="0 0 12 12"><path d="M1.4 3 H7.4 M1.4 5.4 H7.4 M1.4 7.8 H5" stroke="#eeeef6" stroke-width="1.15" stroke-linecap="round"/><path d="M9.4 2.6 V8.2" stroke="#eeeef6" stroke-width="1.1"/><circle cx="8.3" cy="8.6" r="1.3" fill="#eeeef6"/><path d="M9.4 2.6 L11 3.4" stroke="#eeeef6" stroke-width="1.1"/></svg>
<svg style="left:852px;top:44.5px;" width="13" height="13" viewBox="0 0 13 13"><circle cx="6.5" cy="6.5" r="6.2" fill="#e9e3de"/><circle cx="6.5" cy="6.5" r="5.2" fill="#b88a72"/><circle cx="6.5" cy="5.2" r="2.5" fill="#e8c9b4"/><path d="M2.4 10.4 A4.5 4 0 0 1 10.6 10.4 A5.2 5.2 0 0 1 2.4 10.4Z" fill="#8a2f2a"/><path d="M3.6 5.6 A3 3.3 0 0 1 9.4 5.6 L9.6 3.8 A3.3 3 0 0 0 3.4 3.8Z" fill="#6a3f2c"/></svg>
<svg style="left:877.5px;top:45px;" width="6" height="12" viewBox="0 0 6 12"><circle cx="3" cy="2.4" r="0.95" fill="#f2f2f8"/><circle cx="3" cy="6" r="0.95" fill="#f2f2f8"/><circle cx="3" cy="9.6" r="0.95" fill="#f2f2f8"/></svg>
<svg style="left:8px;top:69.5px;" width="10" height="10" viewBox="0 0 10 10"><rect x="0.8" y="0.8" width="3.2" height="3.2" rx="0.3" fill="none" stroke="#e2e3ec" stroke-width="0.9"/><rect x="0.8" y="5.8" width="3.2" height="3.2" rx="0.3" fill="none" stroke="#e2e3ec" stroke-width="0.9"/><rect x="5.8" y="0.8" width="3.2" height="3.2" rx="0.3" fill="none" stroke="#e2e3ec" stroke-width="0.9"/><rect x="5.8" y="5.8" width="3.2" height="3.2" rx="0.3" fill="none" stroke="#e2e3ec" stroke-width="0.9"/></svg>
<div style="left:26px;top:69px;width:0.8px;height:10.5px;background:#5a5c72;"></div>
<svg style="left:35px;top:69.3px;" width="10" height="10" viewBox="0 0 10 10"><circle cx="5" cy="5" r="3.1" fill="#f0f0f6"/><g stroke="#f0f0f6" stroke-width="1.8" stroke-linecap="butt"><path d="M5 0.5 V9.5"/><path d="M1.1 2.75 L8.9 7.25"/><path d="M1.1 7.25 L8.9 2.75"/></g><circle cx="5" cy="5" r="1.3" fill="#35374b"/></svg>
<span id="t90" class="t" style="left:49.5px;top:70.52px;font-size:7.4px;line-height:8.88px;color:#e2e3ec;">Настройки – Пароли</span>
<svg style="left:130px;top:69.3px;" width="10" height="10" viewBox="0 0 10 10"><circle cx="5" cy="5" r="4.7" fill="#e8e9f0"/><circle cx="5" cy="5" r="3.2" fill="#35374b"/><circle cx="5" cy="5" r="1.9" fill="#e8e9f0"/><path d="M5 1.8 H9 M2.3 6.7 L0.9 3.4 M7.6 6.8 L5.4 9.6" stroke="#35374b" stroke-width="0.9"/></svg>
<span id="t91" class="t" style="left:144px;top:70.52px;font-size:7.4px;line-height:8.88px;color:#e2e3ec;transform:scaleX(1.0353);">Что нового</span>
<svg style="left:193px;top:69.5px;" width="9.6" height="9.6" viewBox="0 0 9.6 9.6"><rect x="0" y="0" width="4.5" height="4.5" fill="#f0562a"/><rect x="5.1" y="0" width="4.5" height="4.5" fill="#80ba1f"/><rect x="0" y="5.1" width="4.5" height="4.5" fill="#1ea3ee"/><rect x="5.1" y="5.1" width="4.5" height="4.5" fill="#fdb813"/></svg>
<span id="t92" class="t" style="left:207px;top:70.52px;font-size:7.4px;line-height:8.88px;color:#e2e3ec;transform:scaleX(0.9960);">Microsoft – офіційн...</span>
<svg style="left:288.3px;top:69.2px;" width="10.4" height="10.4" viewBox="0 0 10.4 10.4"><circle cx="5.2" cy="5.2" r="5" fill="#eef2fb"/><circle cx="5.2" cy="5.2" r="3.9" fill="#3b6fd6"/><path d="M4 7.6 L5.4 2.6 L7 3.2 L5.6 8Z" fill="#eef2fb"/></svg>
<span id="t93" class="t" style="left:302.8px;top:70.52px;font-size:7.4px;line-height:8.88px;color:#e2e3ec;transform:scaleX(1.0120);">Nearpod</span>
<svg style="left:341.5px;top:69.3px;" width="10.4" height="10" viewBox="0 0 10.4 10"><rect x="0" y="0" width="10.4" height="10" fill="#f4f6fa"/><rect x="0" y="0" width="10.4" height="1.8" fill="#2f4f94"/><rect x="0" y="8.2" width="10.4" height="1.8" fill="#2f4f94"/><text x="5.2" y="7.3" font-size="4.8" font-weight="700" text-anchor="middle" fill="#1f3d86" font-family="Liberation Sans, sans-serif">IFES</text></svg>
<span id="t94" class="t" style="left:355.5px;top:70.52px;font-size:7.4px;line-height:8.88px;color:#e2e3ec;transform:scaleX(0.9306);">IFES Academy</span>
<svg style="left:411px;top:69.3px;" width="10" height="10" viewBox="0 0 10 10"><circle cx="5" cy="5" r="4.6" fill="#eceef4"/><path d="M2.2 3 Q4 2 4.8 3.4 Q4.2 5 2.6 5.2 Z M5.8 4.6 Q8 4 8.6 5.6 Q8 8 6.2 8.2 Q5.2 6.4 5.8 4.6Z M5 1 Q6.6 1.2 7.4 2.2 Q6 2.8 5 1Z" fill="#35374b"/></svg>
<svg style="left:429.5px;top:68.8px;" width="12" height="12" viewBox="0 0 12 12"><circle cx="5" cy="5" r="3.6" fill="#f6c889" stroke="#e99a3c" stroke-width="1.3"/><path d="M7.8 7.8 L11 11" stroke="#f1f1f1" stroke-width="1.9" stroke-linecap="round"/><circle cx="5" cy="5" r="1.3" fill="#c2571f"/></svg>
<span id="t95" class="t" style="left:444.8px;top:70.52px;font-size:7.4px;line-height:8.88px;color:#e2e3ec;transform:scaleX(0.9767);">Plagiarism Checker...</span>
<svg style="left:525.5px;top:69.3px;" width="10" height="10" viewBox="0 0 10 10"><rect x="0" y="0" width="10" height="10" rx="1" fill="#2f9e5b"/><path d="M5 1.4 V8.6 M1.4 4 H8.6" stroke="#eaf6ee" stroke-width="1.2"/><rect x="1.2" y="1.2" width="7.6" height="7.6" fill="none" stroke="#eaf6ee" stroke-width="0.8"/></svg>
<span id="t96" class="t" style="left:540.5px;top:70.52px;font-size:7.4px;line-height:8.88px;color:#e2e3ec;transform:scaleX(0.9663);">Розклад занять ПА...</span>
<svg style="left:622px;top:69.3px;" width="10" height="10" viewBox="0 0 10 10"><circle cx="5" cy="5" r="4.3" fill="#4a4c62" stroke="#b8bac8" stroke-width="0.9"/><path d="M3.6 3.2 H5.6 A1.3 1.3 0 0 1 5.6 5.6 H3.6 M4.2 3.2 V7.4" stroke="#d8d9e4" stroke-width="0.8" fill="none"/></svg>
<span id="t97" class="t" style="left:636px;top:70.52px;font-size:7.4px;line-height:8.88px;color:#e2e3ec;">Головна | Пенітенц...</span>
<svg style="left:796.5px;top:70px;" width="9" height="9" viewBox="0 0 9 9"><path d="M1.4 1.6 L4.2 4.5 L1.4 7.4 M4.8 1.6 L7.6 4.5 L4.8 7.4" fill="none" stroke="#e2e3ec" stroke-width="1" stroke-linecap="round" stroke-linejoin="round"/></svg>
<div style="left:815.3px;top:69px;width:0.8px;height:10.5px;background:#5a5c72;"></div>
<svg style="left:825px;top:69.5px;" width="11" height="10" viewBox="0 0 11 10"><path d="M1 2 H4.2 L5.4 3.3 H10 V8.6 H1 Z" fill="none" stroke="#e2e3ec" stroke-width="1" stroke-linejoin="round"/></svg>
<span id="t98" class="t" style="left:842px;top:70.52px;font-size:7.4px;line-height:8.88px;color:#e2e3ec;transform:scaleX(0.9299);">Все закладки</span>
</div>
<div class="layer" id="l-panel">
<svg style="left:894.5px;top:38.6px;overflow:hidden;" width="129.5" height="73.6" viewBox="0 0 129.5 74"><g filter="url(#vb)">
<defs>
<linearGradient id="wall" x1="0" x2="1" y1="0" y2="0"><stop offset="0" stop-color="#d6d3cf"/><stop offset="0.17" stop-color="#d9d6d2"/><stop offset="0.18" stop-color="#e0ddd9"/><stop offset="0.3" stop-color="#dedbd7"/><stop offset="0.345" stop-color="#dedbd6"/><stop offset="0.36" stop-color="#c9c3bc"/><stop offset="0.46" stop-color="#d2cdc7"/><stop offset="0.6" stop-color="#d6d2cd"/><stop offset="1" stop-color="#dcd9d5"/></linearGradient>
<radialGradient id="glow" cx="0.62" cy="0.45" r="0.45"><stop offset="0" stop-color="#e6e3df" stop-opacity=".8"/><stop offset="1" stop-color="#d6d2cd" stop-opacity="0"/></radialGradient>
</defs>
<rect x="0" y="0" width="129.5" height="74" fill="url(#wall)"/>
<rect x="0" y="0" width="129.5" height="74" fill="url(#glow)"/>
<rect x="0" y="0" width="23" height="3.2" fill="#b7a89a"/>
<rect x="46" y="0" width="77" height="4.2" fill="#8d7560"/>
<rect x="22.5" y="0" width="0.8" height="70" fill="#c9c5c0"/>
<rect x="44.5" y="3" width="3" height="62" fill="#bcb4aa" opacity=".7"/>
<rect x="121.5" y="4" width="8" height="70" fill="#e3e1de"/>
<!-- shelf items -->
<rect x="2" y="69" width="9.5" height="5" fill="#4a5563"/>
<rect x="14.5" y="70" width="3.2" height="4" fill="#2c4f9a"/>
<path d="M19 74 L20 64 L24 62 L27 66 L30 68 L32 74Z" fill="#8c9a4a"/>
<path d="M21 66 L23 61 L26 64Z" fill="#c9c2a0"/>
<path d="M116 74 L117.5 62 L119 59 L120.5 66 L122 74Z" fill="#6f8a3a"/>
<path d="M118 63 L119 58 L120 63Z" fill="#b5532a"/>
<!-- body -->
<path d="M37.5 74 Q40 63 51 60.5 L60 57 L84 58.5 Q96 62 100.5 74 Z" fill="#2f4450"/>
<!-- hair -->
<path d="M53.5 67 Q50 58 52.5 46 Q55 26.5 68.5 25.8 Q82 26.5 85 44 Q88 57 84.5 66 Q81 69 77.5 62 L60 63 Q57 70 53.5 67Z" fill="#80614a"/>
<path d="M56 50 Q55 34 62 29.5 Q58 38 58.5 52Z" fill="#9a785c"/>
<path d="M81 50 Q82 36 76 29.5 Q80 38 79 52Z" fill="#6c503c"/>
<!-- face -->
<path d="M57.6 41 Q57.2 30.5 68 30.2 Q79.2 30.5 79.6 41 Q80 50 73.5 55.8 Q68.5 58.4 63.5 55.4 Q57.6 50 57.6 41Z" fill="#e6c3b2"/>
<path d="M57 38.5 Q59.5 28.5 68.5 28.6 Q77.5 28.5 80.4 38.5 Q75 32 68.8 33.4 Q62 32 57 38.5Z" fill="#8a6a50"/>
<ellipse cx="62" cy="49" rx="2.6" ry="1.8" fill="#e0a99c" opacity=".6"/><ellipse cx="75.5" cy="49" rx="2.6" ry="1.8" fill="#e0a99c" opacity=".6"/>
<!-- glasses -->
<rect x="58" y="40.2" width="9" height="5.2" rx="1" fill="none" stroke="#23262b" stroke-width="1.3"/>
<rect x="70" y="40.2" width="9" height="5.2" rx="1" fill="none" stroke="#23262b" stroke-width="1.3"/>
<path d="M67 42 H70" stroke="#23262b" stroke-width="1"/>
<path d="M66 51.4 Q68.6 52.6 71.2 51.4" stroke="#a8635c" stroke-width="1.1" fill="none"/>
<!-- hand -->
<path d="M61 62.5 Q60.5 56 65.5 54.6 Q70.5 53.2 73.8 56 Q78 60 77.4 66 L79 74 L66.5 74 Q65 67.5 61 62.5Z" fill="#eee2da"/>
</g><defs><filter id="vb" x="-5%" y="-5%" width="110%" height="110%"><feGaussianBlur stdDeviation="0.55"/></filter></defs></svg>
<div style="left:899.3px;top:146.8px;width:113.6px;height:14px;background:#6163a8;border-radius:2.5px;"></div>
<span id="t99" class="t" style="left:901.6px;top:148.67px;font-size:8.2px;line-height:9.84px;color:#eeeef6;font-weight:700;transform:scaleX(1.0309);">Нітченко Алла Григорівна</span>
<div style="left:912.1px;top:197.6px;width:36.8px;height:36.8px;border-radius:50%;background:#fbe3d5;"></div>
<span id="t100" class="t" style="left:917.5px;top:207.24px;font-size:15.6px;line-height:18.72px;color:#9c5327;width:26px;text-align:center;-webkit-text-stroke:0.45px #9c5327;">ЛО</span>
<div style="left:912.1px;top:197.6px;width:36.8px;height:36.8px;border-radius:50%;overflow:hidden;"><div style="left:0;top:31.4px;width:36.8px;height:8px;background:rgba(20,20,20,.58);"></div></div>
<span id="t101" class="t" style="left:908.4px;top:232.11px;font-size:8px;line-height:9.6px;color:#f4f4f4;font-weight:700;transform:scaleX(1.0574);">Логвине...</span>
<div style="left:971px;top:197.6px;width:36.8px;height:36.8px;border-radius:50%;background:#f6d5d8;"></div>
<span id="t102" class="t" style="left:976.4px;top:207.24px;font-size:15.6px;line-height:18.72px;color:#8a2c35;width:26px;text-align:center;-webkit-text-stroke:0.45px #8a2c35;">ЖМ</span>
<div style="left:971px;top:197.6px;width:36.8px;height:36.8px;border-radius:50%;overflow:hidden;"><div style="left:0;top:31.4px;width:36.8px;height:8px;background:rgba(20,20,20,.58);"></div></div>
<span id="t103" class="t" style="left:967.2px;top:232.11px;font-size:8px;line-height:9.6px;color:#f4f4f4;font-weight:700;transform:scaleX(1.0231);">Жила А...</span>
<div style="left:912.1px;top:256.6px;width:36.8px;height:36.8px;border-radius:50%;background:#f6d5d8;"></div>
<span id="t104" class="t" style="left:917.5px;top:266.24px;font-size:15.6px;line-height:18.72px;color:#8a2c35;width:26px;text-align:center;-webkit-text-stroke:0.45px #8a2c35;">ДО</span>
<div style="left:912.1px;top:256.6px;width:36.8px;height:36.8px;border-radius:50%;overflow:hidden;"><div style="left:0;top:31.4px;width:36.8px;height:8px;background:rgba(20,20,20,.58);"></div></div>
<span id="t105" class="t" style="left:908.4px;top:291.11px;font-size:8px;line-height:9.6px;color:#f4f4f4;font-weight:700;transform:scaleX(1.0418);">Довгобр...</span>
<svg style="left:971px;top:256.6px;" width="36.8" height="36.8" viewBox="0 0 36.8 36.8"><defs><clipPath id="pc1"><circle cx="18.4" cy="18.4" r="18.4"/></clipPath><filter id="pb1"><feGaussianBlur stdDeviation="0.7"/></filter></defs>
<g clip-path="url(#pc1)"><g filter="url(#pb1)"><rect x="-2" y="-2" width="41" height="41" fill="#2f3f1c"/>
<ellipse cx="30" cy="10" rx="8" ry="9" fill="#5f7f2c"/><ellipse cx="7" cy="12" rx="6" ry="10" fill="#3f5522"/><ellipse cx="27" cy="27" rx="9" ry="6" fill="#4c6a28"/><ellipse cx="8" cy="30" rx="8" ry="6" fill="#27321a"/><ellipse cx="14" cy="4" rx="6" ry="4" fill="#71902f"/>
<rect x="9" y="6" width="3.4" height="31" fill="#1d1c14"/>
<ellipse cx="20.5" cy="8.8" rx="3.4" ry="4" fill="#3b281d"/><ellipse cx="21.3" cy="9.6" rx="2.1" ry="2.6" fill="#d9b59c"/>
<path d="M15.5 30 Q15 14.5 20.5 13.5 Q26.5 14.5 26.5 22 Q27.5 27 25.5 30Z" fill="#efece8"/><path d="M16.5 24 L14.5 18 L16.5 15" stroke="#d9b59c" stroke-width="1.6" fill="none"/>
<path d="M15.5 37 L16 29.5 H25.6 L26.4 37Z" fill="#3f5066"/></g></g></svg>
<div style="left:971px;top:256.6px;width:36.8px;height:36.8px;border-radius:50%;overflow:hidden;"><div style="left:0;top:31.4px;width:36.8px;height:8px;background:rgba(20,20,20,.58);"></div></div>
<span id="t106" class="t" style="left:967.2px;top:291.11px;font-size:8px;line-height:9.6px;color:#f4f4f4;font-weight:700;transform:scaleX(1.0783);">Дюба М...</span>
<div style="left:912.1px;top:315.6px;width:36.8px;height:36.8px;border-radius:50%;background:#f6d5d8;"></div>
<span id="t107" class="t" style="left:917.5px;top:325.24px;font-size:15.6px;line-height:18.72px;color:#8a2c35;width:26px;text-align:center;-webkit-text-stroke:0.45px #8a2c35;">ЛМ</span>
<div style="left:912.1px;top:315.6px;width:36.8px;height:36.8px;border-radius:50%;overflow:hidden;"><div style="left:0;top:31.4px;width:36.8px;height:8px;background:rgba(20,20,20,.58);"></div></div>
<span id="t108" class="t" style="left:908.4px;top:350.11px;font-size:8px;line-height:9.6px;color:#f4f4f4;font-weight:700;transform:scaleX(1.0067);">Луговсь...</span>
<div style="left:971px;top:315.6px;width:36.8px;height:36.8px;border-radius:50%;background:#f6d5d8;"></div>
<span id="t109" class="t" style="left:976.4px;top:325.24px;font-size:15.6px;line-height:18.72px;color:#8a2c35;width:26px;text-align:center;-webkit-text-stroke:0.45px #8a2c35;">ТО</span>
<div style="left:971px;top:315.6px;width:36.8px;height:36.8px;border-radius:50%;overflow:hidden;"><div style="left:0;top:31.4px;width:36.8px;height:8px;background:rgba(20,20,20,.58);"></div></div>
<span id="t110" class="t" style="left:967.6px;top:350.11px;font-size:8px;line-height:9.6px;color:#f4f4f4;font-weight:700;transform:scaleX(1.0076);">Твардов...</span>
<div style="left:912.1px;top:374.6px;width:36.8px;height:36.8px;border-radius:50%;background:#cde0d8;"></div>
<span id="t111" class="t" style="left:917.5px;top:384.24px;font-size:15.6px;line-height:18.72px;color:#1f4b44;width:26px;text-align:center;-webkit-text-stroke:0.45px #1f4b44;">КВ</span>
<div style="left:912.1px;top:374.6px;width:36.8px;height:36.8px;border-radius:50%;overflow:hidden;"><div style="left:0;top:31.4px;width:36.8px;height:8px;background:rgba(20,20,20,.58);"></div></div>
<span id="t112" class="t" style="left:908.4px;top:409.11px;font-size:8px;line-height:9.6px;color:#f4f4f4;font-weight:700;transform:scaleX(1.0439);">Калініче...</span>
<div style="left:971px;top:374.6px;width:36.8px;height:36.8px;border-radius:50%;background:#cde0d8;"></div>
<span id="t113" class="t" style="left:976.4px;top:384.24px;font-size:15.6px;line-height:18.72px;color:#1f4b44;width:26px;text-align:center;-webkit-text-stroke:0.45px #1f4b44;">ГС</span>
<div style="left:971px;top:374.6px;width:36.8px;height:36.8px;border-radius:50%;overflow:hidden;"><div style="left:0;top:31.4px;width:36.8px;height:8px;background:rgba(20,20,20,.58);"></div></div>
<span id="t114" class="t" style="left:967.6px;top:409.11px;font-size:8px;line-height:9.6px;color:#f4f4f4;font-weight:700;transform:scaleX(1.0216);">Гребен...</span>
<svg style="left:912.1px;top:433.1px;" width="36.8" height="36.8" viewBox="0 0 36.8 36.8"><defs><clipPath id="pc2"><circle cx="18.4" cy="18.4" r="18.4"/></clipPath><filter id="pb2"><feGaussianBlur stdDeviation="0.7"/></filter></defs>
<g clip-path="url(#pc2)"><g filter="url(#pb2)"><rect x="-2" y="-2" width="41" height="41" fill="#8f9a86"/>
<rect x="-2" y="-2" width="41" height="13" fill="#c7ccc9"/><ellipse cx="31" cy="18" rx="7" ry="12" fill="#55613f"/><ellipse cx="4" cy="16" rx="5" ry="9" fill="#a9ab98"/>
<path d="M6 39 Q3 15 14 5 Q25 1 28 14 Q30 27 25 39Z" fill="#b08d5c"/><path d="M8 39 Q6 22 12 10 L15 18 Q12 28 13 39Z" fill="#c9a671"/>
<ellipse cx="19" cy="14.5" rx="4.8" ry="6" fill="#e2bfa6"/><path d="M14 10 Q19 4 25 11 Q20 8 14 10Z" fill="#9c7a4c"/>
<path d="M3 39 Q4 28 12 27 L14 39Z" fill="#3a3f4c"/><path d="M15 39 Q16 25 21 24 Q27 26 27 39Z" fill="#e9e5e0"/><path d="M26 30 Q29 22 31 24 Q32 29 29 36Z" fill="#e2bfa6"/></g></g></svg>
<div style="left:912.1px;top:433.1px;width:36.8px;height:36.8px;border-radius:50%;overflow:hidden;"><div style="left:0;top:31.4px;width:36.8px;height:8px;background:rgba(20,20,20,.58);"></div></div>
<span id="t115" class="t" style="left:908.4px;top:467.61px;font-size:8px;line-height:9.6px;color:#f4f4f4;font-weight:700;transform:scaleX(1.0046);">Власенк...</span>
<div style="left:971px;top:433.1px;width:36.8px;height:36.8px;border-radius:50%;background:#f6d5d8;"></div>
<span id="t116" class="t" style="left:976.4px;top:442.74px;font-size:15.6px;line-height:18.72px;color:#8a2c35;width:26px;text-align:center;-webkit-text-stroke:0.45px #8a2c35;">МІ</span>
<div style="left:971px;top:433.1px;width:36.8px;height:36.8px;border-radius:50%;overflow:hidden;"><div style="left:0;top:31.4px;width:36.8px;height:8px;background:rgba(20,20,20,.58);"></div></div>
<span id="t117" class="t" style="left:967.6px;top:467.61px;font-size:8px;line-height:9.6px;color:#f4f4f4;font-weight:700;transform:scaleX(1.0375);">Максур...</span>
<div style="left:912.1px;top:491.9px;width:36.8px;height:36.8px;border-radius:50%;background:linear-gradient(180deg,#dbe9f1,#cfe0ea);"></div>
<span id="t118" class="t" style="left:917.5px;top:501.54px;font-size:15.6px;line-height:18.72px;color:#35556f;width:26px;text-align:center;-webkit-text-stroke:0.45px #35556f;">СА</span>
<span id="t119" class="t" style="left:908.4px;top:525.71px;font-size:8px;line-height:9.6px;color:#f4f4f4;font-weight:700;transform:scaleX(1.0326);">Сущик А...</span>
<div style="left:971px;top:491.9px;width:36.8px;height:36.8px;border-radius:50%;background:linear-gradient(180deg,#4458a8 0,#3b4066 7%,#3b3f5e 100%);"></div>
<span id="t120" class="t" style="left:979px;top:505.16px;font-size:8.5px;line-height:10.2px;color:#b9bcd6;transform:scaleX(1.1788);">+40</span>
</div>
<div class="layer" id="l-player">
<div style="left:0px;top:498.2px;width:1024px;height:44.2px;background:rgba(38,38,38,0.714);"></div>
<div style="left:131.8px;top:513.4px;width:621.3px;height:29px;background:#19273e;"></div>
<div style="left:131.8px;top:513.4px;width:621.3px;height:0.8px;background:#233249;"></div>
<span id="t121" class="t" style="left:138.7px;top:521.41px;font-size:6.4px;line-height:7.68px;color:#5c6b86;transform:scaleX(1.0658);">Зведення УДК (УДКС) пропонує вибірку близько 2600 класів з усієї схеми,</span>
<span id="t122" class="t" style="left:138.7px;top:529.81px;font-size:6.4px;line-height:7.68px;color:#5c6b86;transform:scaleX(1.0526);">яка включає понад 70 000 записів. Будь ласка, надсилайте запитання та</span>
<span id="t123" class="t" style="left:138.7px;top:537.61px;font-size:6.4px;line-height:7.68px;color:#5c6b86;transform:scaleX(1.0528);">пропозиції на адресу udcs@udcc.org</span>
<span id="t124" class="t" style="left:389px;top:519px;font-size:30px;line-height:36px;color:#3c4960;transform:scaleX(0.7231);">UDC</span>
<span id="t125" class="t" style="left:501.8px;top:526.98px;font-size:7.6px;line-height:9.12px;color:#56637c;transform:scaleX(1.0909);">Повний розклад UDC дивіться в <b>онлайн-центрі UDC</b></span>
<div style="left:0px;top:542px;width:1024px;height:39px;background:#131313;"></div>
<div style="left:4.3px;top:549.8px;width:114.4px;height:14px;background:#2c2d47;border-radius:2.5px;"></div>
<span id="t126" class="t" style="left:8px;top:551.38px;font-size:7.9px;line-height:9.48px;color:#4a4b60;font-weight:700;transform:scaleX(1.0540);">Нітченко Алла Григорівна</span>
<div style="left:30px;top:579.2px;width:30.5px;height:4px;background:#3c3c3c;border-radius:2px;"></div>
<div style="left:54.5px;top:508px;width:720px;height:3.2px;background:#f58220;border-radius:1.6px;"></div>
<div style="left:781px;top:508.6px;width:190px;height:2.2px;background:#c6c6c6;border-radius:1.1px;"></div>
<div style="left:768.3px;top:502.3px;width:14px;height:14px;border-radius:50%;background:#4b4b4b;"></div>
<div style="left:771.1px;top:505.1px;width:8.4px;height:8.4px;border-radius:50%;background:#f58220;"></div>
<span id="t127" class="t" style="left:11px;top:506.24px;font-size:7.6px;line-height:9.12px;color:#ffffff;transform:scaleX(1.0654);">0:29:14</span>
<span id="t128" class="t" style="left:987.6px;top:506.24px;font-size:7.6px;line-height:9.12px;color:#ffffff;transform:scaleX(1.0535);">0:07:46</span>
<span id="t129" class="t" style="left:11.3px;top:543.44px;font-size:13.2px;line-height:15.84px;color:#ffffff;font-weight:700;transform:scaleX(1.0167);">17.11.2025 Засідання наукового гуртка Правник-202511...</span>
<svg style="left:406.5px;top:543.6px;" width="14" height="14" viewBox="0 0 14 14"><path d="M1.2 4 H3.4 Q5 4 6 5.4 L8 8.6 Q9 10 10.6 10 H12.4 M1.2 10 H3.4 Q5 10 6 8.6 M8 5.4 Q9 4 10.6 4 H12.4 M10.8 2.2 L12.6 4 L10.8 5.8 M10.8 8.2 L12.6 10 L10.8 11.8" fill="none" stroke="#f2f2f2" stroke-width="1" stroke-linecap="round" stroke-linejoin="round"/><path d="M2.6 2 L11.6 12" stroke="#f2f2f2" stroke-width="0.9" stroke-linecap="round"/></svg>
<svg style="left:439px;top:544.1px;" width="13" height="13" viewBox="0 0 13 13"><path d="M2.2 1.8 V11.2" stroke="#f2f2f2" stroke-width="1.3" stroke-linecap="round"/><path d="M11.4 1.6 V11.4 L4.2 6.5 Z" fill="#f2f2f2"/></svg>
<svg style="left:470px;top:543.1px;" width="15" height="15" viewBox="0 0 15 15"><path d="M3.2 6.4 A5.2 5.2 0 0 1 12.9 7.4" fill="none" stroke="#f2f2f2" stroke-width="1" stroke-linecap="round"/><path d="M2.6 2.8 V6.8 H6.4" fill="none" stroke="#f2f2f2" stroke-width="1" stroke-linecap="round" stroke-linejoin="round"/><text x="8.6" y="14.2" font-size="6.6" text-anchor="middle" fill="#f2f2f2" font-family="Liberation Sans, sans-serif">10</text></svg>
<svg style="left:494px;top:531.5px;" width="38" height="38" viewBox="0 0 38 38"><defs><linearGradient id="ring" x1="0.1" y1="0.1" x2="0.9" y2="0.95"><stop offset="0" stop-color="#f7931e"/><stop offset="0.45" stop-color="#f0702a"/><stop offset="0.75" stop-color="#d63a8c"/><stop offset="1" stop-color="#8a4fd8"/></linearGradient></defs><circle cx="19" cy="19" r="16.2" fill="#1c1c1c" stroke="url(#ring)" stroke-width="2.3"/><path d="M13.4 11.6 L26.6 19 L13.4 26.4 Z" fill="#fff" stroke="#fff" stroke-width="1.4" stroke-linejoin="round"/></svg>
<svg style="left:542px;top:543.1px;" width="15" height="15" viewBox="0 0 15 15"><path d="M11.8 6.4 A5.2 5.2 0 0 0 2.1 7.4" fill="none" stroke="#f2f2f2" stroke-width="1" stroke-linecap="round"/><path d="M12.4 2.8 V6.8 H8.6" fill="none" stroke="#f2f2f2" stroke-width="1" stroke-linecap="round" stroke-linejoin="round"/><text x="6.6" y="14.2" font-size="6.6" text-anchor="middle" fill="#f2f2f2" font-family="Liberation Sans, sans-serif">30</text></svg>
<svg style="left:573.5px;top:544.1px;" width="13" height="13" viewBox="0 0 13 13"><path d="M10.8 1.8 V11.2" stroke="#7a7a7a" stroke-width="1.3" stroke-linecap="round"/><path d="M1.6 1.6 V11.4 L8.8 6.5 Z" fill="#7a7a7a"/></svg>
<svg style="left:605px;top:543.6px;" width="14" height="14" viewBox="0 0 14 14"><path d="M2 6.4 V5.4 Q2 3.4 4 3.4 H10.6 M8.8 1.4 L10.8 3.4 L8.8 5.4 M12 7.6 V8.6 Q12 10.6 10 10.6 H3.4 M5.2 8.6 L3.2 10.6 L5.2 12.6" fill="none" stroke="#f2f2f2" stroke-width="1" stroke-linecap="round" stroke-linejoin="round"/><path d="M2.4 1.6 L11.8 12.6" stroke="#f2f2f2" stroke-width="0.9" stroke-linecap="round"/></svg>
<svg style="left:878.7px;top:545.4px;" width="13" height="11" viewBox="0 0 13 11"><rect x="1" y="1.2" width="10.8" height="8" rx="1.6" fill="none" stroke="#f2f2f2" stroke-width="1"/><path d="M2.8 6.8 H5.2 M6.4 6.8 H9.8" stroke="#f2f2f2" stroke-width="1.2"/></svg>
<svg style="left:909.5px;top:544.6px;" width="14" height="12" viewBox="0 0 14 12"><path d="M1 4.4 H3.2 L6 2 V10 L3.2 7.6 H1 Z" fill="none" stroke="#f2f2f2" stroke-width="0.95" stroke-linejoin="round"/><path d="M7.8 4.2 Q8.8 6 7.8 7.8 M9.5 3 Q11.2 6 9.5 9 M11.2 1.8 Q13.6 6 11.2 10.2" fill="none" stroke="#f2f2f2" stroke-width="0.95" stroke-linecap="round"/></svg>
<svg style="left:941.5px;top:544.6px;" width="12" height="12" viewBox="0 0 12 12"><path d="M1.4 10.6 L10.6 1.4 M6.6 1.4 H10.6 V5.4 M1.4 6.6 V10.6 H5.4" fill="none" stroke="#f2f2f2" stroke-width="1" stroke-linecap="round" stroke-linejoin="round"/></svg>
<svg style="left:973px;top:544.6px;" width="12" height="12" viewBox="0 0 12 12"><path d="M1.2 5 V2.2 Q1.2 1.2 2.2 1.2 H9.8 Q10.8 1.2 10.8 2.2 V9.8 Q10.8 10.8 9.8 10.8 H7" fill="none" stroke="#f2f2f2" stroke-width="1" stroke-linecap="round"/><path d="M6.4 1.4 V5.6 H10.6" fill="none" stroke="#f2f2f2" stroke-width="1"/><path d="M1.4 10.6 L5.2 6.8 M2.4 6.6 H5.4 V9.6" fill="none" stroke="#f2f2f2" stroke-width="1" stroke-linecap="round" stroke-linejoin="round"/></svg>
<svg style="left:1004px;top:548.6px;" width="12" height="4" viewBox="0 0 12 4"><circle cx="2" cy="2" r="0.95" fill="#f2f2f2"/><circle cx="6" cy="2" r="0.95" fill="#f2f2f2"/><circle cx="10" cy="2" r="0.95" fill="#f2f2f2"/></svg>
</div>
</div></body></html>
